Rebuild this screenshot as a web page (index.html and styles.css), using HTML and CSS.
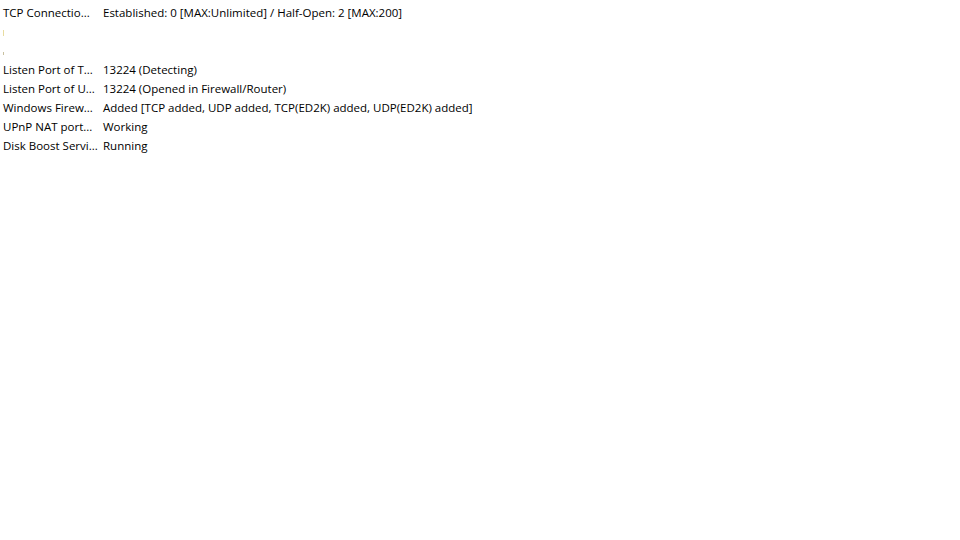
FILE: index.html
```html
<!DOCTYPE html>
<html lang="en">
  <head>
    <meta charset="UTF-8" />
    <title>Network Status</title>
    <link rel="stylesheet" href="styles.css">
  </head>
  <body>
    <table class="status-list">
      <tr><td class="key">TCP Connectio...</td><td>Established: 0 [MAX:Unlimited] / Half-Open: 2 [MAX:200]</td></tr>
      <tr><td class="key"><span class="mark"></span></td><td></td></tr>
      <tr><td class="key"><span class="mark small"></span></td><td></td></tr>
      <tr><td class="key">Listen Port of T...</td><td>13224 (Detecting)</td></tr>
      <tr><td class="key">Listen Port of U...</td><td>13224 (Opened in Firewall/Router)</td></tr>
      <tr><td class="key">Windows Firew...</td><td>Added [TCP added, UDP added, TCP(ED2K) added, UDP(ED2K) added]</td></tr>
      <tr><td class="key">UPnP NAT port...</td><td>Working</td></tr>
      <tr><td class="key">Disk Boost Servi...</td><td>Running</td></tr>
    </table>
  </body>
</html>
```

FILE: styles.css
```css
* {
  margin: 0;
  padding: 0;
  box-sizing: border-box;
}
body {
  background: white;
  font-family: "Open Sans", "Noto Sans", sans-serif;
  font-size: 11.5px;
  color: #000;
  padding-top: 3px;
}
.status-list {
  border-collapse: collapse;
  table-layout: fixed;
  width: 600px;
}
.status-list td {
  height: 19px;
  padding: 0 0 0 3px;
  white-space: nowrap;
  vertical-align: middle;
}
.status-list td.key {
  width: 100px;
}
.mark {
  display: inline-block;
  width: 1px;
  height: 6px;
  background: #e8dca0;
}
.mark.small {
  height: 3px;
  margin-top: 4px;
  background: #c8c0a0;
}
```
